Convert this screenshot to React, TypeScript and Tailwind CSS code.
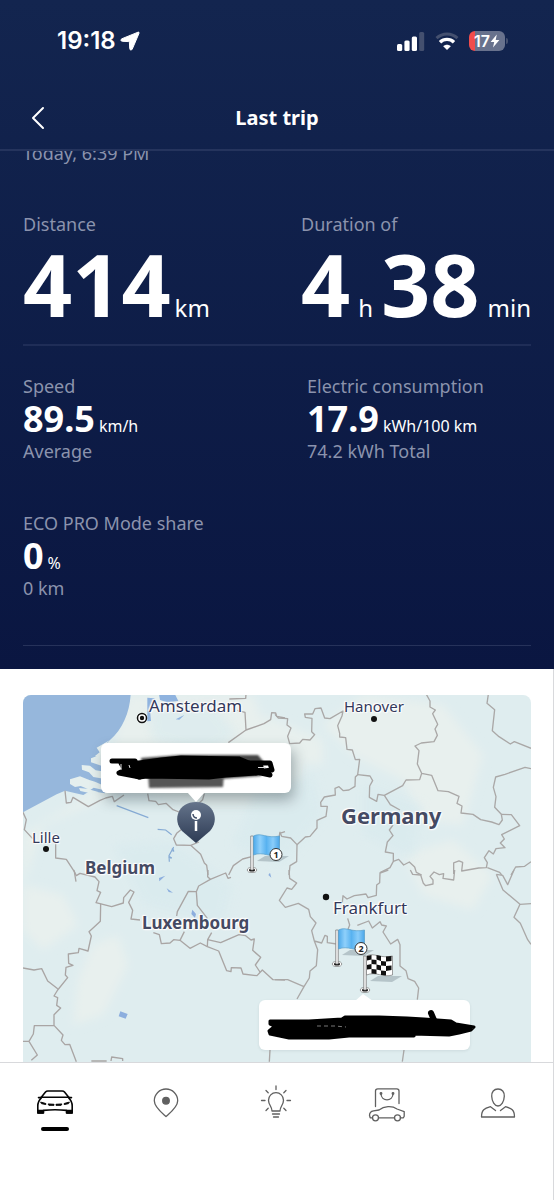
import type { ReactNode } from "react";

const LABEL = "text-lg leading-6 text-[#8b93ad]";
const HERO_DIGITS = "text-[86px] font-bold leading-[80px]";

function StatusBar() {
  return (
    <div className="flex h-[82px] items-center justify-between pl-[57px] pr-[46px]">
      <div className="flex items-center gap-1 font-['Inter',sans-serif] text-2xl font-semibold leading-7 text-white">
        <span>19:18</span>
        <svg width="20" height="20" viewBox="0 0 20 20" aria-hidden="true">
          <path d="M18 1.200 2 7.700c-1.600.7-1.400 2.500.3 2.600l6.500.3c.4 0 .6.2.6.6l.3 6.300c.1 1.800 1.900 2.100 2.600.5L19 2.300c.3-.9-.200-1.400-1-1.100z" fill="#fff" stroke="#fff" strokeWidth="1" strokeLinejoin="round" />
        </svg>
      </div>
      <div className="flex items-center gap-[10px]">
        <svg width="28" height="19" viewBox="0 0 28 19" aria-hidden="true">
          <rect x="0" y="12" width="5.200" height="7" rx="1.500" fill="#fff" />
          <rect x="7.400" y="8.500" width="5.200" height="10.500" rx="1.500" fill="#fff" />
          <rect x="14.800" y="4.500" width="5.200" height="14.500" rx="1.500" fill="#fff" />
          <rect x="22.200" y="0" width="5" height="19" rx="1.500" fill="#44506f" />
        </svg>
        <svg width="24" height="18" viewBox="0 0 24 18" aria-hidden="true">
          <path d="M1.500 6.200C7.500.6 16.500.6 22.500 6.200" fill="none" stroke="#44506f" strokeWidth="3" />
          <path d="M5 10.200c4-3.800 10-3.800 14 0" fill="none" stroke="#fff" strokeWidth="3.400" />
          <path d="M12 18 8.200 14.200c2.200-2 5.400-2 7.600 0z" fill="#fff" />
        </svg>
        <div className="flex items-center gap-px">
          <div className="flex h-5 w-9 items-center justify-center rounded-md bg-linear-to-r from-[#f04c4c] from-17% to-[#68728d] to-17% font-['Inter',sans-serif] text-base font-semibold leading-5 text-white">
            <span>17</span>
            <svg width="10" height="14" viewBox="0 0 10 14" aria-hidden="true">
              <path d="M6.800.5.600 8h3.600l-1.200 5.500L9.400 6H5.700z" fill="#fff" />
            </svg>
          </div>
          <div className="h-[6px] w-[2px] rounded-r bg-[#44506f]" />
        </div>
      </div>
    </div>
  );
}

function Metric({ label, value, unit, note }: { label: string; value: string; unit: string; note: string }) {
  return (
    <div>
      <div className={LABEL}>{label}</div>
      <div className="flex items-baseline gap-1 whitespace-nowrap text-white">
        <span className="text-4xl font-bold leading-[41px]">{value}</span>
        <span className="text-base">{unit}</span>
      </div>
      <div className={LABEL}>{note}</div>
    </div>
  );
}

function Flag({ x, y, n }: { x: number; y: number; n?: number }) {
  return (
    <g transform={`translate(${x} ${y})`}>
      <path d="M5 -9 13 -14H37L27 -8z" fill="#8c9ba3" opacity=".5" />
      <ellipse cx="0" cy="0" rx="4.700" ry="2.500" fill="#fff" stroke="#777" strokeWidth=".7" />
      <ellipse cx="0" cy="0" rx="3" ry="1.600" fill="#111" />
      <path d="M-1.300 0V-34H1.300V0z" fill="#eee" stroke="#777" strokeWidth=".7" />
      <path
        d="M1.500-34C9-38 15-31 27.500-34V-15C18-12 11-19 1.500-15z"
        fill={n ? "url(#flagBlue)" : "#fff"}
        stroke={n ? "#579dc9" : "#777"}
        strokeWidth=".7"
      />
      {n ? (
        <>
          <circle cx="24" cy="-15.500" r="6" fill="#fff" stroke="#333" strokeWidth="1" />
          <text x="24" y="-12.300" textAnchor="middle" fontSize="9" fontWeight="700" fill="#222">{n}</text>
        </>
      ) : (
        <path
          d="M2-34 6.500-35V-30.500L2-29.500zM11.500-35 16-34V-29L11.500-30.500zM21-33.500 26.500-34V-29L21-28.500zM6.500-30.500 11.500-30V-25.500L6.500-26zM16-29 21-28.500V-24L16-24.500zM2-25 6.500-26V-21L2-20.500zM11.500-25.500 16-24.500V-19.500L11.500-20.500zM21-24 26.500-24.500V-20L21-19zM6.500-21 11.500-20.500V-16L6.500-16.500zM16-19.500 21-19V-14.500L16-15z"
          fill="#111"
        />
      )}
    </g>
  );
}

function MapDrawing() {
  return (
    <svg className="block h-auto w-full" viewBox="0 0 508 367" aria-hidden="true">
      <defs>
        <linearGradient id="flagBlue">
          <stop offset="0" stopColor="#4da9ea" />
          <stop offset=".25" stopColor="#8fd0fb" />
          <stop offset=".5" stopColor="#58b2f0" />
          <stop offset=".75" stopColor="#8acdfa" />
          <stop offset="1" stopColor="#4ba6e8" />
        </linearGradient>
        <filter id="soft" x="-20%" y="-20%" width="140%" height="140%">
          <feGaussianBlur stdDeviation="5" />
        </filter>
      </defs>
      <rect width="508" height="367" fill="#dfedef" />
      <g fill="#e8f0ee" filter="url(#soft)">
        <path d="M105 0H230L245 40 280 70 270 110 180 110 100 95 20 130 0 190V140L80 90z" />
        <path d="M340 0 420 10 460 60 440 130 400 125 380 85 330 60 300 30z" />
        <path d="M70 250 95 240 105 270 80 320 50 330 55 285zM0 190 40 200 55 230 20 255 0 235z" />
        <path d="M240 20 300 45 300 70 250 65zM380 160 430 145 470 180 450 215 400 200z" />
      </g>
      <g fill="#d8eaee" opacity=".6" filter="url(#soft)">
        <path d="M125 15 190 10 215 40 180 60 130 45zM230 100 290 80 300 120 260 170 210 150zM340 90 400 110 390 165 340 140z" />
        <path d="M90 150 150 145 210 190 200 230 120 210z" />
      </g>

      <g transform="translate(-8 -10) scale(.33333)">
        <path d="M24 28H347C344 82 323 132 285 165L270 182V325L225 318 205 330 150 317 125 328 24 382z" fill="#96b7dc" />
        <path d="M285 165 245 188 254 202 240 213 270 222V180zM228 220 228 232 270 246V222L244 214zM200 240 225 242 242 256 270 260V282L235 276 222 262 201 254zM165 283 195 274 223 285 240 290 262 300V314L236 308 226 315 197 303 180 306 165 297zM192 309 216 311 250 321 240 328 196 318z" fill="#e5efee" />
        <path d="M397 38 418 40 422 62 405 76 408 108 397 109zM432 28H480L490 48 456 52 435 45zM482 103 500 94 508 90 493 104z" fill="#8fb3df" />
        <path d="M305 362 400 398M428 433 452 435 470 449M476 486 462 512 463 530" fill="none" stroke="#86abd5" strokeWidth="3.500" />
        <path d="M472 490 476 500M462 515 470 520" stroke="#86abd5" strokeWidth="5" />
        <g fill="none" stroke="#a9a5a4" strokeWidth="4" strokeLinejoin="round">
          <path d="M24 382 34 404 28 434 53 461M122 475V519L154 523 178 560 183 590M150 317 154 354 168 352 174 337 220 365 255 346 272 339 292 334 298 350 327 330M398 326 402 347 422 349 430 359 453 355 474 374 492 381M640 173 693 135 747 116 767 104 770 83 782 84 785 94 810 99M693 135 690 82 667 76M643 42 692 40 693 28M568 326 563 344 550 356" />
          <path d="M500 433 485 445 476 461 484 480 527 481 557 508 568 534 575 541 579 570M552 471 527 481M641 570 655 542 683 522 710 515M790 485 794 445 810 440" />
        </g>
      </g>

      <g transform="translate(252 -10) scale(.33333)" fill="none" stroke="#aaa8a7" strokeWidth="4" strokeLinejoin="round">
        <path d="M0 88 10 99 38 101 36 120 48 129 38 154 44 176 74 174 83 163 105 165 119 149 110 140 111 100 91 97 89 87 113 87 120 71 138 69 149 99 165 101 204 78 201 93 188 122 194 145 194 156 212 158 216 193 232 195 241 224 254 223 248 269 241 276 240 304 222 315 205 317 192 305 180 310 181 330 148 336 137 352 138 364 157 364 153 394 126 406 126 429 105 454 91 456 66 479 47 459 20 454 14 440" />
        <path d="M66 479 65 530 45 542 42 570M248 269 285 273 293 287 284 303 283 337 305 349 309 328 328 331 346 359 375 375M328 331 383 302 393 285 434 284 440 265 427 237 432 197 420 183 439 174 477 170 487 151 480 132 488 118 473 86 481 75 465 66 465 48 454 28M440 265 470 271 489 317 520 320 552 334 546 355 561 363 558 384 594 388 617 404 650 411 672 419 682 405 679 388 659 367 663 335 655 307 662 276 690 268 750 247 768 251" />
        <path d="M640 28 636 55 659 74 652 137 672 155 706 177 718 170 768 190M679 388 709 389 734 422 680 449 688 462 676 474 690 488 663 491 655 507 642 497 628 518 637 533 634 548 611 549 560 558 563 532 552 528 536 534 536 567M637 548 674 562 680 570M768 530 749 544 722 546 708 570M354 420 343 435 354 452 337 471 331 501 355 505 355 529 345 548 315 563M355 529 371 523 386 540 403 531 419 546 424 562 440 570" />
      </g>

      <g transform="translate(-8 175) scale(.33333)">
        <path d="M432 24 451 17 433 34zM455 55 474 68 461 66zM316 424 338 432 332 446 311 439zM532 119 543 132 540 144 529 132zM765 8 769 23 760 15z" fill="#8caede" />
        <g fill="none" stroke="#a9a5a4" strokeWidth="4" strokeLinejoin="round">
          <path d="M176 0 184 17 195 10 240 21 252 35 246 62 257 67 243 98 290 110 325 99 326 83 346 60 357 66 341 97 353 121 348 147 375 150M415 188 433 194 439 221 465 219 476 209 495 211 525 235 556 219 577 230 611 243 635 302 648 305 649 293 678 294 684 312 726 317 742 300 774 329 810 330" />
          <path d="M257 101 256 154 222 185 229 198 219 243 192 235 190 248 160 252 161 280 174 286 153 292 151 315 158 323 128 360 117 378 128 383 125 406 137 414 117 434 117 466 144 495 139 511 150 524 164 523 184 575M24 294 57 300 80 296 98 333 128 356M117 466 58 467 55 492 42 514 24 514M42 514 67 555 49 571" />
          <path d="M495 211 508 185M485 138 487 125 520 64 544 65 551 48 586 28 578 20 579 0M586 28 632 9 639 25 648 22M544 65 547 106 577 145M577 230 578 209 590 188M578 209 617 218 672 194 692 197 708 210 718 207 713 241 737 262 721 285 735 306M229 573H275M288 573 290 561 323 566V573M765 540 763 575" />
        </g>
      </g>

      <g transform="translate(252 175) scale(.33333)" fill="none" stroke="#aaa8a7" strokeWidth="4" strokeLinejoin="round">
        <path d="M42 0 44 25 65 39 50 58 36 54 13 91 31 112 70 100 101 118 106 140 123 159 110 182 118 213 128 239 124 287 105 303 103 324 87 350 66 387M0 329H38L87 350M118 213 140 219 150 196 157 199V218L185 222" />
        <path d="M340 0 315 9 314 38 305 45 304 76 279 83 273 72 238 77 216 87 204 77 202 97M218 145 224 165 219 178 249 190M247 166 281 153 292 174 315 155 320 165 334 168 324 186 347 222 368 208 375 224V288L393 302 399 326 419 334 431 354 427 389M406 0 413 13 437 15 445 40 452 47 474 42 474 30 465 19 477 6 493 14 506 11 504 25 536 30 539 0M664 13 683 16 698 44 717 0M664 13 684 60 735 103 768 101M735 103 717 142 736 160 758 209 768 223M387 540 382 575" />
      </g>

      <g fill="#111">
        <circle cx="351" cy="24" r="3" />
        <circle cx="23" cy="154" r="3" />
        <circle cx="303" cy="202" r="3.200" />
        <circle cx="119" cy="23" r="4.500" fill="#fff" stroke="#111" strokeWidth="1.500" />
        <circle cx="119" cy="23" r="2.200" />
      </g>
    </svg>
  );
}

const CITY = "text-[17px] text-[#33385a]";
const TOWN = "text-[15px] text-[#33385a]";
const COUNTRY = "text-[17px] font-bold text-[#454a63]";
const COUNTRY_LARGE = "text-[22px] font-bold text-[#454a63]";

const places = [
  { name: "Amsterdam", x: 126, y: 11, style: CITY },
  { name: "Hanover", x: 321, y: 11, style: TOWN },
  { name: "Lille", x: 9, y: 142, style: TOWN },
  { name: "Frankfurt", x: 310, y: 213, style: CITY },
  { name: "Belgium", x: 62, y: 173, style: COUNTRY },
  { name: "Luxembourg", x: 119, y: 228, style: COUNTRY },
  { name: "Germany", x: 318, y: 120, style: COUNTRY_LARGE },
];

function at(x: number, y: number) {
  return { left: `${(x / 508) * 100}%`, top: `${(y / 367) * 100}%` };
}

const HALO =
  "absolute -translate-y-1/2 whitespace-nowrap leading-6 [text-shadow:0_0_2px_#fff,0_0_2px_#fff,0_0_3px_#fff,1px_1px_1px_#fff,-1px_-1px_1px_#fff]";

function TripMap() {
  return (
    <div className="relative overflow-hidden rounded-t-lg">
      <MapDrawing />
      {places.map((p) => (
        <span key={p.name} style={at(p.x, p.y)} className={`${HALO} ${p.style}`}>
          {p.name}
        </span>
      ))}

      <div style={at(78, 48)} className="absolute h-[50px] w-[190px] rounded-md bg-white shadow-[3px_7px_14px_rgba(40,60,70,0.4)]">
        <svg className="absolute left-0 top-0" width="190" height="62" viewBox="0 0 190 62" aria-hidden="true">
          <defs>
            <filter id="smudge"><feGaussianBlur stdDeviation="1.200" /></filter>
          </defs>
          <path d="M86 49H104L95 59z" fill="#fff" />
          <g filter="url(#smudge)">
            <path d="M40 15 80 12 157 12 162 18 160 33 120 36 42 34z" fill="#444" />
            <path d="M47 31H123L122 44 48 45z" fill="#555" />
          </g>
          <path d="M22 19 38 19 60 16 80 14 138 15 150 20 160 20 162 28 156 31 125 33 108 35 46 34 38 35 26 30z" fill="#000" stroke="#000" strokeWidth="3" strokeLinejoin="round" />
          <path d="M11 18 34 18M20 20 24 27 18 30 39 34M148 20 169 20 171 27 155 29 169 32" fill="none" stroke="#000" strokeWidth="5" strokeLinecap="round" strokeLinejoin="round" />
          <path d="M20 21V27M157 24.500 165 24.500M28 22 29 25" fill="none" stroke="#ddd" strokeWidth="1" />
        </svg>
      </div>

      <svg className="pointer-events-none absolute inset-0 h-full w-full" viewBox="0 0 508 367" aria-hidden="true">
        <defs>
          <linearGradient id="pin" x2="0" y2="1">
            <stop offset="0" stopColor="#65748b" />
            <stop offset="1" stopColor="#2d3b54" />
          </linearGradient>
        </defs>
        <path d="M173 148 159 136C149 125 155 107 173 107S197 125 187 136z" fill="url(#pin)" />
        <circle cx="173" cy="120" r="5" fill="#fff" />
        <path d="M170 119c.2 2.500 1.500 4 4 4" fill="none" stroke="#435169" strokeWidth="1.500" />
        <path d="M173 126V136" stroke="#fff" strokeWidth="2.500" />
        <Flag x={229} y={175} n={1} />
        <Flag x={314} y={269} n={2} />
        <Flag x={342} y={295} />
      </svg>

      <div style={at(236, 305)} className="absolute h-[50px] w-[211px] rounded-md bg-white shadow-[0_1px_3px_rgba(40,60,70,0.1)]">
        <svg className="absolute -top-2 left-0" width="220" height="58" viewBox="0 0 220 58" aria-hidden="true">
          <path d="M96 9 104 2 114 9z" fill="#fff" />
          <path d="M11 29 50 29 83 27 86 25 120 25 148 26 165 27 192 29 197 32 215 35 212 38 200 41 190 43 153 42 155 44 90 44 70 46 30 46 11 42 10 39 16 34 11 32z" fill="#000" stroke="#000" strokeWidth="3" strokeLinejoin="round" />
          <path d="M172 21 175 28" stroke="#000" strokeWidth="6" strokeLinecap="round" />
          <path d="M58 34 76 34 87 35" fill="none" stroke="#777" strokeWidth="1" strokeDasharray="4 3" />
        </svg>
      </div>
    </div>
  );
}

const tabs: { name: string; icon: ReactNode }[] = [
  {
    name: "Vehicle",
    icon: (
      <g stroke="#050505" strokeWidth="1.600">
        <path d="M8.500 10 12.500 5c.7-.8 1.300-1 2.400-1h14.200c1.100 0 1.700.2 2.400 1l4 5M7.500 10.300h29M5.500 10.600H8M36 10.600h2.500" />
        <path d="M8.300 10.800C5.500 13.500 4.800 15.500 4.800 19v7h5.700v-2.600c7.500-.8 15.500-.8 23 0V26h5.700v-7c0-3.500-.7-5.500-3.500-8.200" />
        <path d="M5 23.500h5V26H5zM34 23.500h5V26h-5z" fill="#050505" />
        <path d="M8 15.200l4.800 1.300v1l-4-.8zM36 15.200l-4.800 1.300v1l4-.8zM15.500 17l5.500.3v1h-4.800zM28.500 17l-5.500.3v1h4.800z" fill="#050505" strokeWidth="1" />
      </g>
    ),
  },
  {
    name: "Map",
    icon: (
      <>
        <path d="M22 29.500C17.500 25.500 10.300 20 10.300 13.700a11.700 11.700 0 0 1 23.400 0C33.700 20 26.500 25.500 22 29.500z" />
        <circle cx="22" cy="13.700" r="3.300" fill="#606060" />
      </>
    ),
  },
  {
    name: "Discover",
    icon: (
      <>
        <path d="M18 24C18 19.500 14.500 18 14.500 13.200a7.500 7.500 0 0 1 15 0c0 4.800-3.500 6.300-3.500 10.800zM18.500 27h7M19.500 30h5" />
        <path d="M22 -1v3.500M12 3.500l2.200 2.200M32 3.500l-2.200 2.200M7.500 13.500h3.500M33 13.500h3.500M12 23.500l2.200-2.200M32 23.500l-2.200-2.200" />
      </>
    ),
  },
  {
    name: "Store",
    icon: (
      <>
        <path d="M10.500 19.500V4C10.500 2.500 11.300 1.800 12.700 1.800h19.100C33.200 1.800 34 2.500 34 4V16.500M16 6.500c0 8.500 12 8.500 12 0" />
        <circle cx="16" cy="6.500" r=".8" />
        <circle cx="28" cy="6.500" r=".8" />
        <path d="M7.500 30.800H5.200l-.7-2.500c0-3 1-4 4-4.500l5.500-.8c5-4 13-4.500 18-1l7.200 2.600v4.700l-.8 1.500h-3.200M13.500 30.800h16" />
        <circle cx="10.500" cy="30.800" r="3" />
        <circle cx="32.500" cy="30.800" r="3" />
      </>
    ),
  },
  {
    name: "Profile",
    icon: (
      <>
        <path d="M22 2c4.200 0 6.400 3 6.300 7.300-.2 5.200-3 9.700-6.300 9.700s-6.100-4.500-6.300-9.700C15.600 5 17.800 2 22 2z" />
        <path d="M19.500 23.500 14.500 19.700C8.500 21.500 5.500 22.500 5.500 30h33c0-7.500-3-8.500-9-10.300L24.500 23.500" />
      </>
    ),
  },
];

export default function App() {
  return (
    <div className="flex min-h-screen flex-col bg-white font-['Noto_Sans',sans-serif]">
      <div className="bg-linear-to-b from-[#13254f] to-[#0a1641]">
        <header className="border-b-2 border-[#25345d]">
          <StatusBar />
          <div className="grid h-[67px] grid-cols-[52px_1fr_52px] items-center pl-3 pr-3">
            <button type="button" aria-label="Back" className="flex h-11 w-[52px] items-center justify-center pt-1">
              <svg width="14" height="24" viewBox="0 0 14 24" fill="none" stroke="#fff" strokeWidth="2" strokeLinecap="round" strokeLinejoin="round" aria-hidden="true">
                <path d="M12 2 2 12l10 10" />
              </svg>
            </button>
            <h1 className="pt-1 text-center text-xl font-bold leading-7 text-white">Last trip</h1>
          </div>
        </header>

        <section className="overflow-hidden px-[23px] pb-[23px]">
          <p className={`-mt-[10px] ${LABEL}`}>Today, 6:39 PM</p>

          <div className="mt-[47px] flex justify-between">
            <div>
              <div className={LABEL}>Distance</div>
              <div className="mt-2 flex items-baseline gap-1 text-white">
                <span className={HERO_DIGITS}>414</span>
                <span className="text-2xl">km</span>
              </div>
            </div>
            <div>
              <div className={LABEL}>Duration of</div>
              <div className="mt-2 flex items-baseline gap-2 text-white">
                <span className={HERO_DIGITS}>4</span>
                <span className="text-2xl">h</span>
                <span className={HERO_DIGITS}>38</span>
                <span className="text-2xl">min</span>
              </div>
            </div>
          </div>

          <hr className="mt-5 border-t-2 border-[#1f2d57]" />

          <div className="mt-7 grid grid-cols-2 gap-x-[60px] gap-y-12">
            <Metric label="Speed" value="89.5" unit="km/h" note="Average" />
            <Metric label="Electric consumption" value="17.9" unit="kWh/100 km" note="74.2 kWh Total" />
            <Metric label="ECO PRO Mode share" value="0" unit="%" note="0 km" />
          </div>

          <hr className="mt-[45px] border-[#26325a]" />
        </section>
      </div>

      <main className="border-r border-[#d8d9dc] pl-[23px] pr-[22px] pt-[26px]">
        <TripMap />
      </main>

      <nav className="grid grow grid-cols-5 border-r border-t border-[#d8d9dc] bg-white" aria-label="Main">
        {tabs.map((tab, i) => (
          <button key={tab.name} type="button" aria-label={tab.name} className="flex flex-col items-center justify-start pb-16 pt-6">
            <svg className="overflow-visible" width="44" height="36" viewBox="0 0 44 36" fill="none" stroke="#606060" strokeWidth="1.300" strokeLinecap="round" strokeLinejoin="round" aria-hidden="true">
              {tab.icon}
            </svg>
            {i === 0 && <span className="mt-1 h-1 w-7 rounded-sm bg-black" />}
          </button>
        ))}
      </nav>
    </div>
  );
}
